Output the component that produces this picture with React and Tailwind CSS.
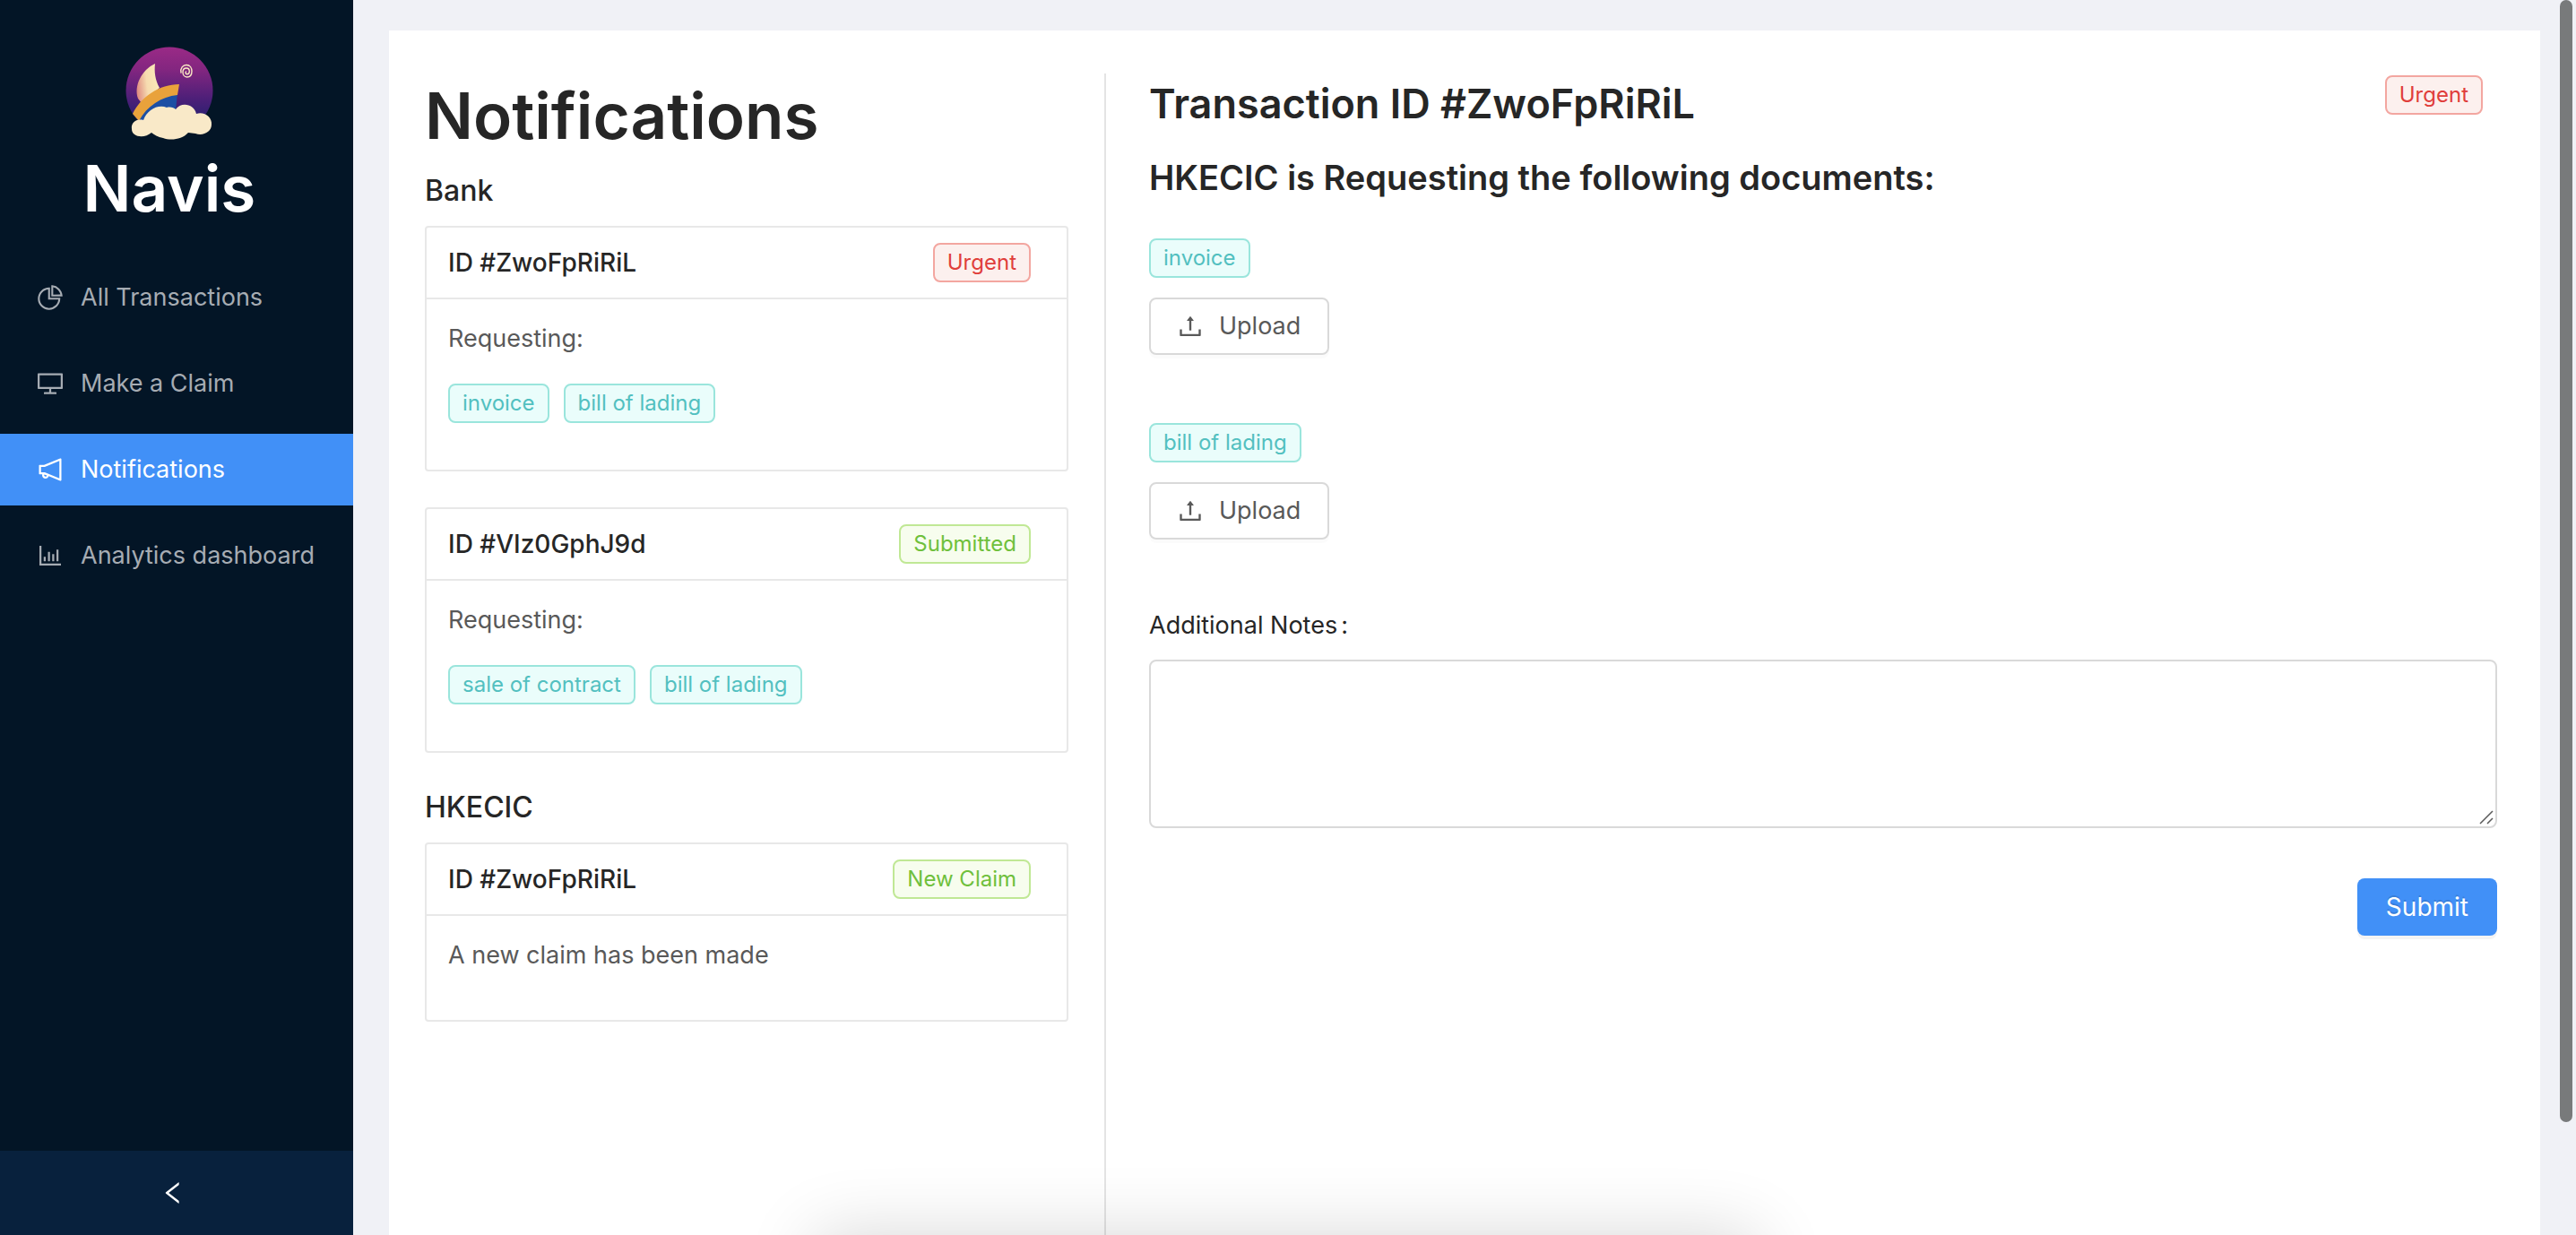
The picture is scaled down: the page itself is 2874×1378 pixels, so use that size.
import {
  AiOutlinePieChart,
  AiOutlineDesktop,
  AiOutlineNotification,
  AiOutlineBarChart,
  AiOutlineUpload,
  AiOutlineLeft,
} from "react-icons/ai";

const tones = {
  red: "border-[#f3a6a0] bg-[#fcf0ee] text-[#e03e3b]",
  green: "border-[#c0e895] bg-[#f7fdee] text-[#6fc03c]",
  cyan: "border-[#9ae5dc] bg-[#eafdfb] text-[#52c0c0]",
};

function Tag({ tone, children }) {
  return (
    <span className={`inline-flex h-11 items-center rounded-lg border-2 px-3.5 text-2xl whitespace-nowrap ${tones[tone]}`}>
      {children}
    </span>
  );
}

function Logo() {
  return (
    <svg className="h-[106px] w-[98px]" viewBox="0 0 98 106" aria-label="Navis logo" role="img">
      <defs>
        <linearGradient id="sky" x1="0" y1="0" x2="0" y2="1">
          <stop offset="0" stopColor="#9a2a86" />
          <stop offset="0.25" stopColor="#842680" />
          <stop offset="0.6" stopColor="#4c1f78" />
          <stop offset="0.85" stopColor="#272070" />
        </linearGradient>
        <linearGradient id="sail" x1="0" y1="0.6" x2="1" y2="0.4">
          <stop offset="0" stopColor="#e08d82" />
          <stop offset="0.45" stopColor="#f6dcb0" />
          <stop offset="1" stopColor="#fbeab8" />
        </linearGradient>
      </defs>
      <circle cx="49" cy="50" r="48.5" fill="url(#sky)" />
      <path d="M33 20C18 27 9 45 14 59L18 64L38 47C33 38 32 29 33 20Z" fill="url(#sail)" />
      <path d="M14 84C22 65 38 54 58 53L56 72L40 84Z" fill="#1c4fa4" />
      <path d="M60 43L58 55C40 57 24 67 15 84L8 76C17 57 38 43 60 43Z" fill="#e9a23b" />
      <path
        d="M62 30C61 25 64 21.500 68 21.500C72 21.500 74 25 74 28.500C74 32.500 72 35 68.500 35C65.500 35 64 32 64 29.500C64 27 65.500 25 68 25C70.500 25 71.300 27 71.300 28.700C71.300 30.500 70 31.700 68.500 31.700C67 31.700 66.700 30 67.500 29"
        fill="none"
        stroke="#fbeac4"
        strokeWidth="1.4"
        strokeLinecap="round"
      />
      <path
        d="M20 83C24 72 36 65 46 69C50 68 54 69 56 71C62 62 77 65 79 76C88 73 97 80 96 88C96 96 87 101 78 98L70 97C63 105 50 106 42 103C36 102 32 99 29 97C21 104 7 102 7 93C6 86 12 81 20 83Z"
        fill="#f9e9c8"
      />
    </svg>
  );
}

const menu = [
  { label: "All Transactions", Icon: AiOutlinePieChart },
  { label: "Make a Claim", Icon: AiOutlineDesktop },
  { label: "Notifications", Icon: AiOutlineNotification, active: true },
  { label: "Analytics dashboard", Icon: AiOutlineBarChart },
];

function Sidebar() {
  return (
    <aside className="flex w-[394px] shrink-0 flex-col bg-[#031526]">
      <div className="flex flex-col items-center pt-[51px] pr-4">
        <Logo />
        <h1 className="text-[71px] leading-[106px] font-semibold text-white">Navis</h1>
      </div>
      <nav className="mt-[29px] flex flex-1 flex-col gap-4">
        {menu.map(({ label, Icon, active }) => (
          <a
            key={label}
            href="#"
            className={`flex h-20 items-center gap-[18px] pl-10 text-[27px] whitespace-nowrap ${
              active ? "bg-[#4190f7] text-white" : "text-[#a6acb3]"
            }`}
          >
            <Icon className="size-8 shrink-0" />
            {label}
          </a>
        ))}
      </nav>
      <button aria-label="Collapse menu" className="flex h-[94px] items-center justify-center bg-[#08213d] pr-2 text-white">
        <AiOutlineLeft className="size-8" />
      </button>
    </aside>
  );
}

function NoticeCard({ id, status, tone, text, docs = [] }) {
  return (
    <article className="rounded-sm border-2 border-[#e8e8e8] leading-[44px]">
      <header className="flex h-20 items-center justify-between border-b-2 border-[#e8e8e8] pr-10 pl-6">
        <h3 className="text-[28px] font-medium text-[#262626]">{id}</h3>
        <Tag tone={tone}>{status}</Tag>
      </header>
      <div className="px-6 pt-[22px] pb-6 text-[27px] text-[#595959]">
        <p className="mb-[26px]">{text}</p>
        {docs.length > 0 && (
          <div className="flex gap-4 pt-0.5 pb-7">
            {docs.map((d) => (
              <Tag key={d} tone="cyan">{d}</Tag>
            ))}
          </div>
        )}
      </div>
    </article>
  );
}

function UploadItem({ name }) {
  return (
    <div className="flex flex-col items-start gap-[22px]">
      <Tag tone="cyan">{name}</Tag>
      <button className="flex h-16 items-center gap-4 rounded-lg border-2 border-[#d9d9d9] pr-[30px] pl-7 text-[27px] text-[#595959] shadow-[0_4px_0_rgba(0,0,0,0.015)]">
        <AiOutlineUpload className="size-8" />
        Upload
      </button>
    </div>
  );
}

export default function App() {
  return (
    <div className="relative flex h-screen overflow-hidden bg-[#f0f1f6] font-['Inter',sans-serif] text-[#262626]">
      <Sidebar />
      <main className="flex flex-1 px-10 pt-[34px]">
        <div className="flex flex-1 bg-white pt-12 pr-12 pl-10">
          <section className="w-[760px] shrink-0 border-r-2 border-[#e4e4e4] pr-10">
            <h2 className="text-[71px] leading-[94px] font-semibold">Notifications</h2>
            <h3 className="mt-3 mb-3.5 text-[32px] leading-[50px] font-medium">Bank</h3>
            <div className="flex flex-col gap-10">
              <NoticeCard id="ID #ZwoFpRiRiL" status="Urgent" tone="red" text="Requesting:" docs={["invoice", "bill of lading"]} />
              <NoticeCard id="ID #VIz0GphJ9d" status="Submitted" tone="green" text="Requesting:" docs={["sale of contract", "bill of lading"]} />
            </div>
            <h3 className="mt-9 mb-3.5 text-[32px] leading-[50px] font-medium">HKECIC</h3>
            <NoticeCard id="ID #ZwoFpRiRiL" status="New Claim" tone="green" text="A new claim has been made" />
          </section>
          <section className="flex min-w-0 flex-1 flex-col pl-12">
            <div className="flex items-start justify-between pt-0.5 pr-4">
              <h2 className="text-[45px] leading-[64px] font-semibold">Transaction ID #ZwoFpRiRiL</h2>
              <Tag tone="red">Urgent</Tag>
            </div>
            <h3 className="mt-[22px] text-[38px] leading-[56px] font-semibold">HKECIC is Requesting the following documents:</h3>
            <div className="mt-10 flex flex-col gap-[76px]">
              <UploadItem name="invoice" />
              <UploadItem name="bill of lading" />
            </div>
            <label htmlFor="notes" className="mt-[74px] text-[27px] leading-[44px]">
              Additional Notes<span className="ml-1">:</span>
            </label>
            <div className="relative mt-4 h-[188px]">
              <textarea id="notes" className="size-full resize-none rounded-lg border-2 border-[#d9d9d9] px-5 py-2 text-[27px] outline-none" />
              <svg className="pointer-events-none absolute right-1 bottom-1 size-4" viewBox="0 0 16 16" stroke="#595959" strokeWidth="1.5">
                <path d="M1 15L15 1M9 15L15 9" />
              </svg>
            </div>
            <button className="mt-14 flex h-16 items-center self-end rounded-lg bg-[#4190f7] px-8 text-[28px] text-white shadow-[0_4px_0_rgba(0,0,0,0.045)] [text-shadow:0_-2px_0_rgba(0,0,0,0.12)]">
              Submit
            </button>
          </section>
        </div>
      </main>
      <div className="absolute top-0 right-1 h-[1252px] w-3.5 rounded-full bg-[#787a7b]" />
      <div className="pointer-events-none absolute bottom-0 left-[820px] h-[100px] w-[1230px] overflow-hidden">
        <div className="mx-[90px] mt-[100px] h-40 shadow-[0_0_80px_rgba(0,0,0,0.16)]" />
      </div>
    </div>
  );
}
